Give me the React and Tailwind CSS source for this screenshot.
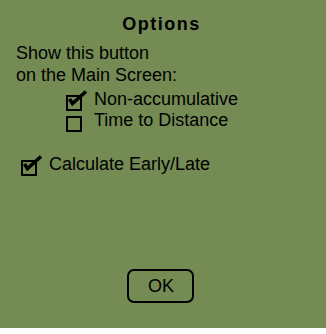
const CheckBox = ({ checked }) => (
  <svg width="24" height="22" viewBox="0 0 24 22" className="shrink-0" shapeRendering="crispEdges">
    <rect x="2" y="6" width="14" height="14" fill="none" stroke="#000" strokeWidth="2" />
    {checked && (
      <polyline
        points="4.5,9 7.5,13.5 21,1.5"
        fill="none"
        stroke="#000"
        strokeWidth="3.5"
        strokeLinejoin="miter"
        shapeRendering="geometricPrecision"
      />
    )}
  </svg>
);

const Option = ({ checked, label, className = "" }) => (
  <div className={`flex items-start h-[22px] ${className}`}>
    <div className="mt-[2px]">
      <CheckBox checked={checked} />
    </div>
    <span className="ml-[5px]">{label}</span>
  </div>
);

export default function App() {
  return (
    <div
      className="w-full h-[328px] bg-[#748c54] text-black text-[18px] leading-[22px] pt-[13px]"
      style={{ fontFamily: '"Liberation Sans", Arial, sans-serif' }}
    >
      {/* Title */}
      <div className="text-center font-bold tracking-[1.5px] pr-[3px]">Options</div>

      <div className="pl-[16px] mt-[7px]">
        <div>Show this button</div>
        <div>on the Main Screen:</div>
      </div>

      {/* Main screen buttons */}
      <div className="pl-[65px] mt-[2px]">
        <Option checked label="Non-accumulative" />
        <Option label="Time to Distance" className="mt-[-1px]" />
      </div>

      <div className="pl-[20px] mt-[22px]">
        <Option checked label="Calculate Early/Late" />
      </div>

      {/* OK button */}
      <div className="flex justify-center mt-[94px] pr-[6px]">
        <button className="w-[67px] h-[34px] border-2 border-black rounded-[7px] flex items-center justify-center pl-[2px]">
          OK
        </button>
      </div>
    </div>
  );
}
